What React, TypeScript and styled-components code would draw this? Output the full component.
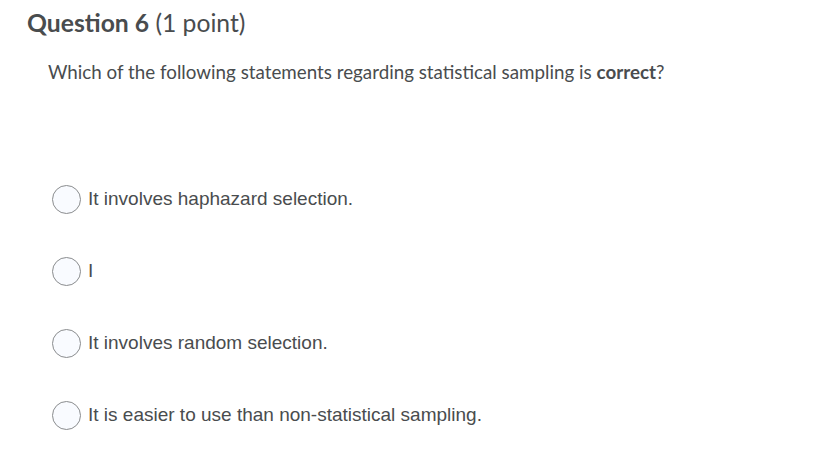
import React from 'react';
import styled, { createGlobalStyle } from 'styled-components';

const GlobalStyle = createGlobalStyle`
  body {
    margin: 0;
    background: #ffffff;
  }
`;

const Page = styled.div`
  width: 826px;
  height: 467px;
  box-sizing: border-box;
  padding: 8px 0 0 27px;
  background: #ffffff;
  color: #494c4e;
`;

const Heading = styled.h2`
  margin: 0;
  font-family: Lato, 'Liberation Sans', sans-serif;
  font-size: 24.7px;
  font-weight: 400;
  line-height: 30px;
  color: #494c4e;

  strong {
    font-weight: 700;
  }
`;

const Prompt = styled.p`
  margin: 22px 0 0 21px;
  font-family: Lato, 'Liberation Sans', sans-serif;
  font-size: 18.8px;
  line-height: 24px;
  color: #494c4e;

  strong {
    font-weight: 700;
  }
`;

const Options = styled.div`
  display: flex;
  flex-direction: column;
  gap: 42px;
  margin: 100px 0 0 25px;
`;

const Option = styled.label`
  display: flex;
  align-items: center;
  gap: 7px;
  height: 30px;
  font-family: 'Liberation Sans', Arial, sans-serif;
  font-size: 19px;
  color: #494c4e;
  cursor: pointer;
`;

const Radio = styled.span`
  width: 29px;
  height: 29px;
  box-sizing: border-box;
  border-radius: 50%;
  border: 1px solid #8a8c8e;
  background: #f9fbff;
  flex-shrink: 0;
`;

const answers = [
  'It involves haphazard selection.',
  'I',
  'It involves random selection.',
  'It is easier to use than non-statistical sampling.',
];

export default function App() {
  return (
    <>
      <GlobalStyle />
      <Page>
        <Heading>
          <strong>Question 6</strong> (1 point)
        </Heading>
        <Prompt>
          Which of the following statements regarding statistical sampling is <strong>correct</strong>?
        </Prompt>
        <Options>
          {answers.map((a) => (
            <Option key={a}>
              <Radio />
              {a}
            </Option>
          ))}
        </Options>
      </Page>
    </>
  );
}
